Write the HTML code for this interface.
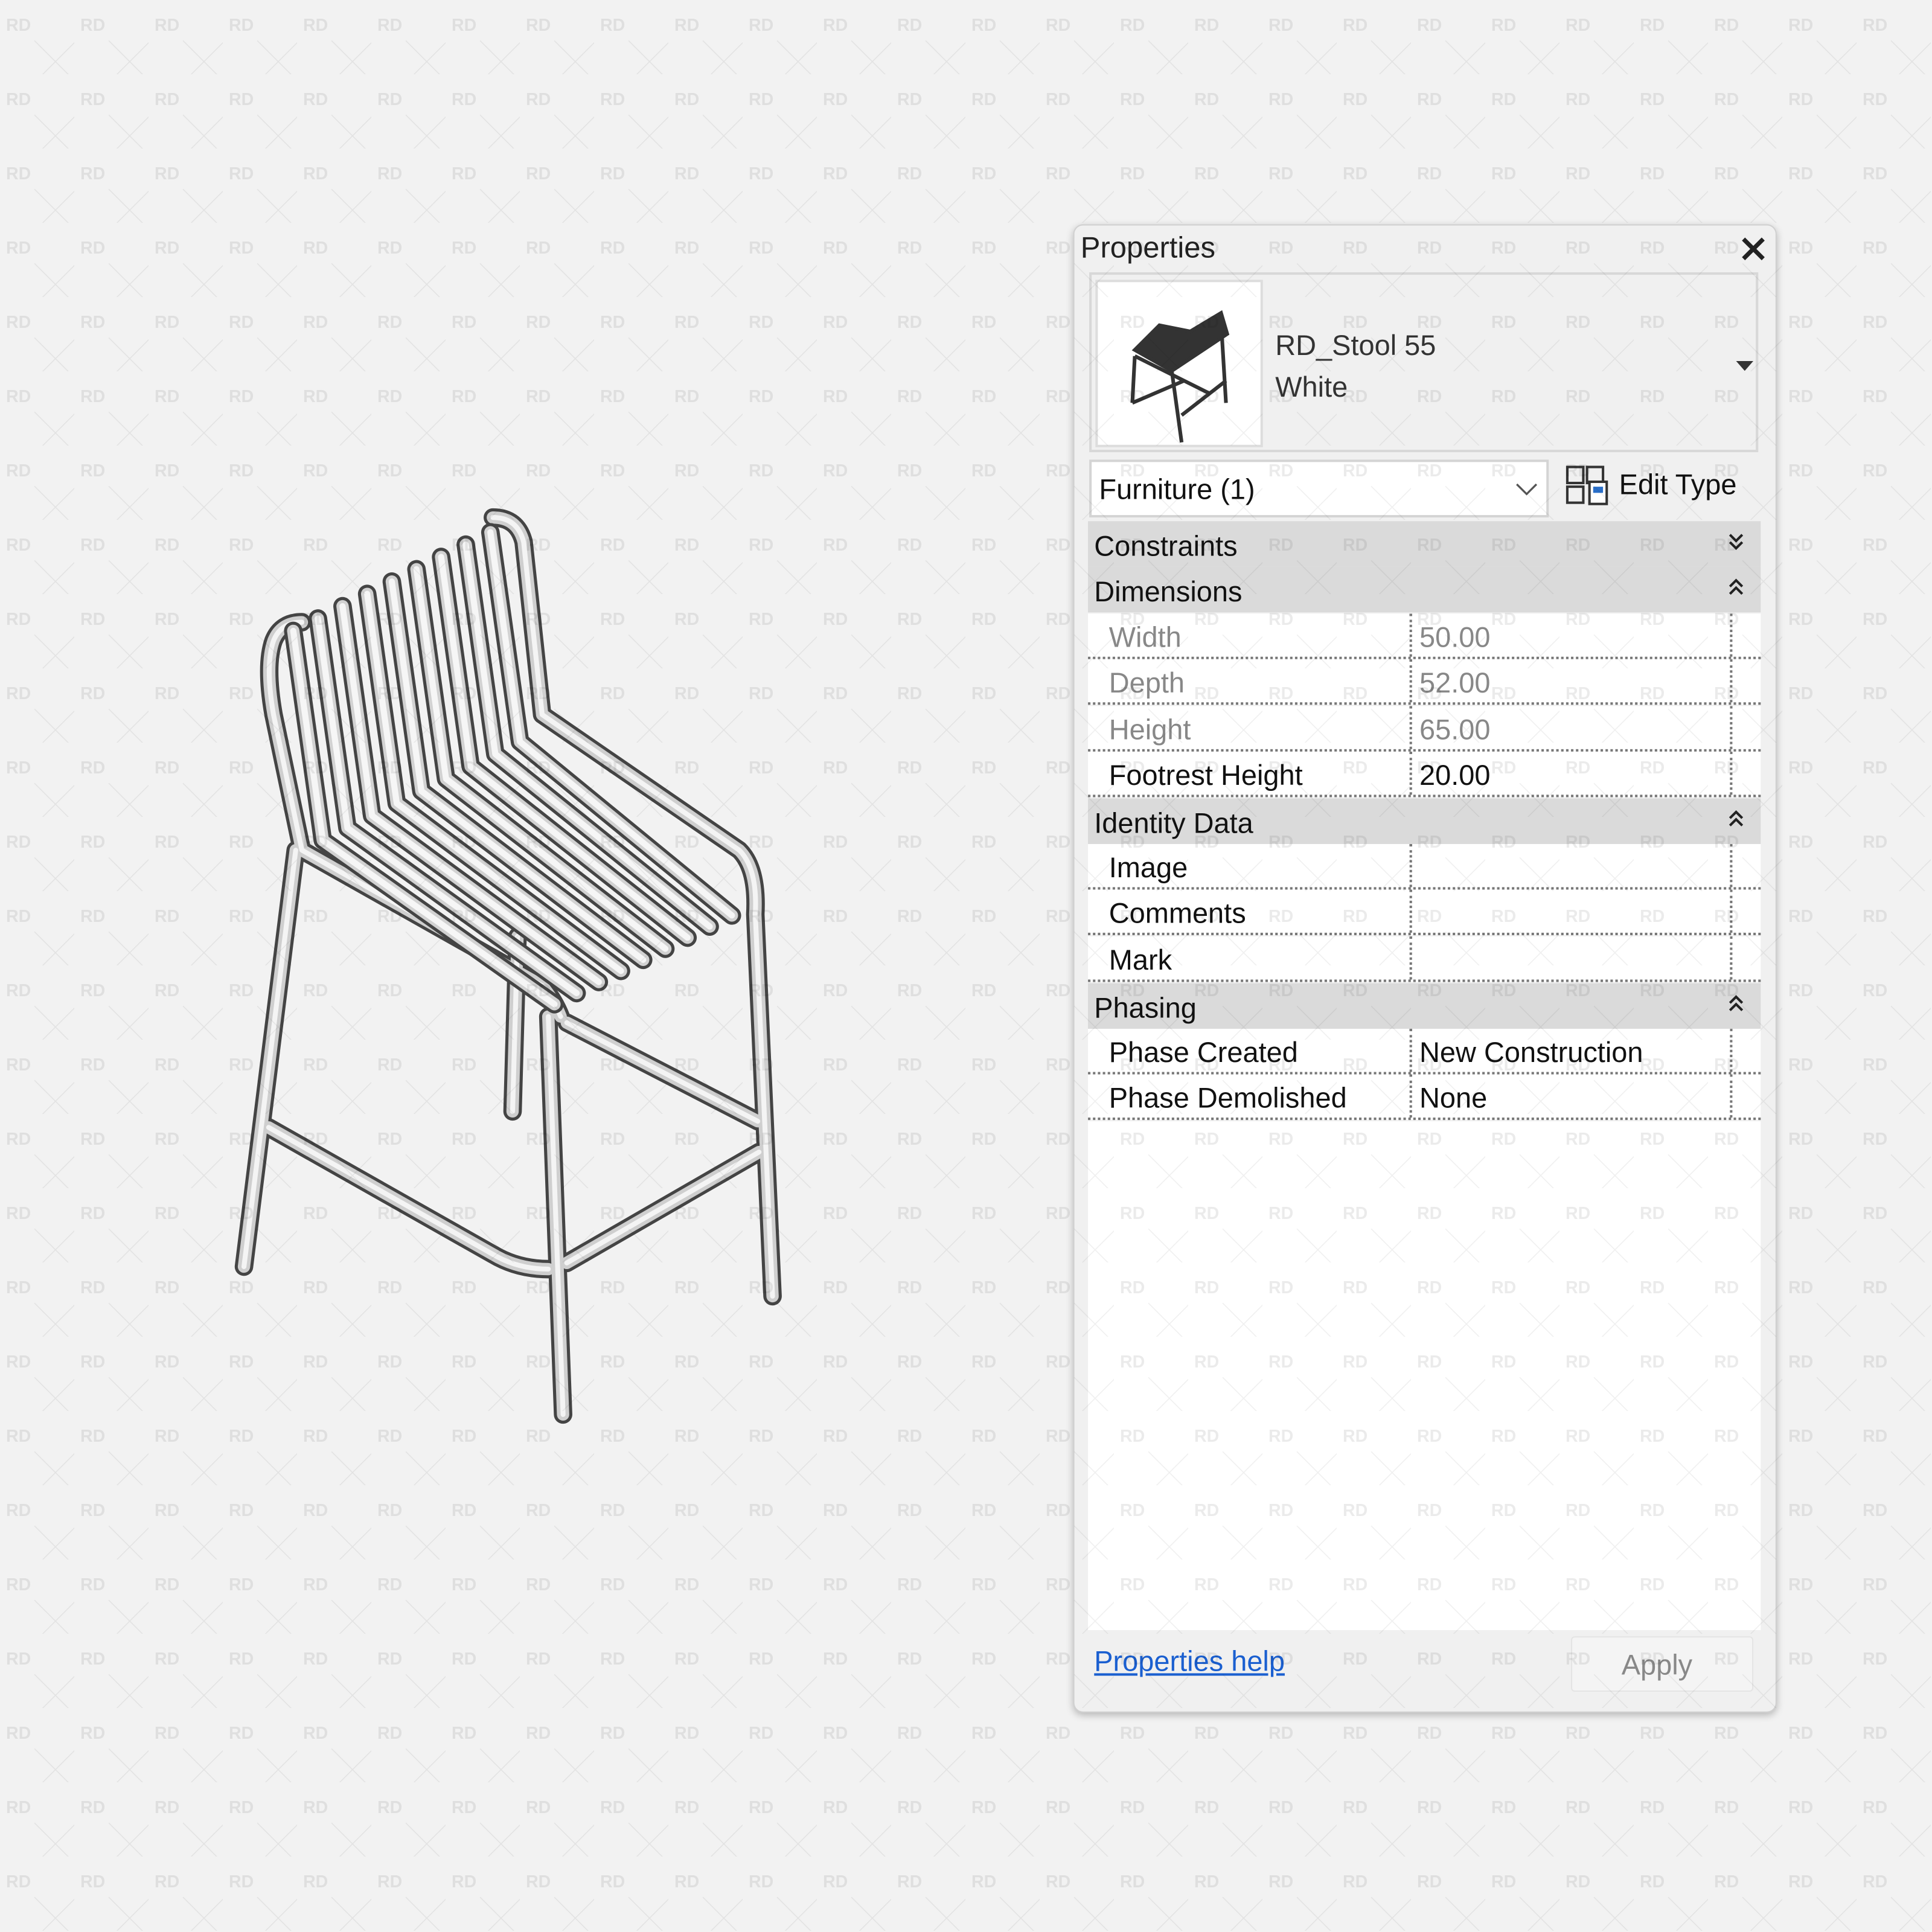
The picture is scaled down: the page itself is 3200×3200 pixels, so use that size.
<!DOCTYPE html>
<html><head><meta charset="utf-8"><style>
html,body{margin:0;padding:0;}
body{width:3200px;height:3200px;overflow:hidden;background:#f2f2f2;font-family:"Liberation Sans","DejaVu Sans",sans-serif;}
#s{position:absolute;left:0;top:0;width:1568px;height:1568px;transform:scale(2.040816);transform-origin:0 0;}
.a{position:absolute;}
#panel{left:871px;top:182px;width:569px;height:1206px;background:#f0f0f0;border:1px solid #d0d0d0;border-radius:8px;box-shadow:0 2px 6px rgba(0,0,0,0.25);}
.t{position:absolute;font-size:23px;color:#111;white-space:nowrap;line-height:1;}
.hdr{position:absolute;left:11px;width:546px;height:37px;background:#dadada;}
.hdr span{position:absolute;left:5px;top:7px;font-size:23px;color:#111;}
.hdr svg{position:absolute;right:14px;top:9px;}
.row{position:absolute;left:11px;width:546px;height:37px;background:#fff;border-bottom:2px dotted #777;box-sizing:border-box;}
.row .l{position:absolute;left:17px;top:6px;font-size:23px;color:#111;}
.row .v{position:absolute;left:261px;top:0;height:35px;width:258px;border-left:2px dotted #777;border-right:2px dotted #777;}
.row .v span{position:absolute;left:6px;top:6px;font-size:23px;color:#111;}
.row.g .l,.row.g .v span{color:#888;}
#wm{position:absolute;left:0;top:0;width:1568px;height:1568px;pointer-events:none;}
</style></head><body><div id="s">

<svg class="a" style="left:0;top:0" width="1568" height="1568">
<defs>
<path id="legs" d="M240 690 L198 1028 M445 825 L457 1148 M613 742 L627 1052 M420 760 L416 902 M218 915 L400 1018 Q420 1030 445 1030 M460 1025 L616 935 M460 830 L615 910 M222 520 Q215 540 222 580 L245 690 L440 800 Q450 812 455 825 M440 580 L600 690 Q615 705 613 742 M222 520 Q228 505 245 505 M400 420 Q420 420 425 440 L440 580"/>
<path id="sl" d="M238 512 L262 682 L450 815 M258 502 L282 672 L468 806 M278 492 L302 662 L486 797 M298 482 L322 652 L504 788 M318 472 L342 642 L522 779 M338 462 L362 632 L540 770 M358 452 L382 622 L558 761 M378 442 L402 612 L576 752 M398 432 L422 602 L594 743"/>
</defs>
<g fill="none" stroke-linecap="round" stroke-linejoin="round">
<use href="#legs" stroke="#444" stroke-width="15"/>
<use href="#legs" stroke="#cfcfcf" stroke-width="10"/>
<use href="#legs" stroke="#f4f4f4" stroke-width="4"/>
<use href="#sl" stroke="#444" stroke-width="15"/>
<use href="#sl" stroke="#d2d2d2" stroke-width="10"/>
<use href="#sl" stroke="#f6f6f6" stroke-width="5"/>
</g>
</svg>

<div id="panel" class="a">
<div class="t" style="left:5px;top:7px;font-size:24px;color:#222">Properties</div>
<svg class="a" style="left:540px;top:8px" width="22" height="22"><path d="M3 3 L19 19 M19 3 L3 19" stroke="#222" stroke-width="3.5"/></svg>
<div class="a" style="left:12px;top:38px;width:543px;height:146px;border:2px solid #d8d8d8;box-sizing:border-box"></div>
<div class="a" style="left:17px;top:44px;width:136px;height:136px;background:#fff;border:2px solid #ddd;box-sizing:border-box">
<svg width="132" height="132"><g stroke="#333" stroke-width="3" fill="none"><path d="M30 60 L28 98 M60 72 L68 130 M100 32 L104 98 M30 60 L90 90 M28 98 L70 80 M68 108 L104 80"/><path d="M30 55 L60 72 L105 42 L100 25 L75 40 L50 35 Z" fill="#333"/></g></svg></div>
<div class="t" style="left:163px;top:86px;color:#333">RD_Stool 55</div>
<div class="t" style="left:163px;top:120px;color:#333">White</div>
<svg class="a" style="left:537px;top:110px" width="14" height="10"><path d="M0 0 L14 0 L7 8Z" fill="#333"/></svg>
<div class="a" style="left:12px;top:190px;width:373px;height:47px;background:#fff;border:2px solid #d4d4d4;box-sizing:border-box"></div>
<div class="t" style="left:20px;top:203px">Furniture (1)</div>
<svg class="a" style="left:358px;top:208px" width="18" height="12"><path d="M1 2 L9 10 L17 2" stroke="#555" stroke-width="1.6" fill="none"/></svg>
<svg class="a" style="left:398px;top:194px" width="36" height="34"><g fill="none" stroke="#333" stroke-width="2"><rect x="2" y="2" width="13" height="13"/><rect x="2" y="18" width="13" height="13"/><rect x="18" y="2" width="13" height="13"/><rect x="20" y="14" width="14" height="18" fill="#fff"/></g><rect x="23" y="18" width="8" height="5" fill="#2a6fc9"/></svg>
<div class="t" style="left:442px;top:199px">Edit Type</div>

<div class="hdr" style="top:240px"><span>Constraints</span><svg width="12" height="16"><path d="M1 2 L6 7 L11 2 M1 8 L6 13 L11 8" stroke="#222" stroke-width="2" fill="none"/></svg></div>
<div class="hdr" style="top:277px"><span>Dimensions</span><svg width="12" height="16"><path d="M1 7 L6 2 L11 7 M1 13 L6 8 L11 13" stroke="#222" stroke-width="2" fill="none"/></svg></div>
<div class="row g" style="top:315px"><span class="l">Width</span><div class="v"><span>50.00</span></div></div>
<div class="row g" style="top:352px"><span class="l">Depth</span><div class="v"><span>52.00</span></div></div>
<div class="row g" style="top:390px"><span class="l">Height</span><div class="v"><span>65.00</span></div></div>
<div class="row" style="top:427px"><span class="l">Footrest Height</span><div class="v"><span>20.00</span></div></div>
<div class="hdr" style="top:465px"><span>Identity Data</span><svg width="12" height="16"><path d="M1 7 L6 2 L11 7 M1 13 L6 8 L11 13" stroke="#222" stroke-width="2" fill="none"/></svg></div>
<div class="row" style="top:502px"><span class="l">Image</span><div class="v"></div></div>
<div class="row" style="top:539px"><span class="l">Comments</span><div class="v"></div></div>
<div class="row" style="top:577px"><span class="l">Mark</span><div class="v"></div></div>
<div class="hdr" style="top:615px"><span>Phasing</span><svg width="12" height="16"><path d="M1 7 L6 2 L11 7 M1 13 L6 8 L11 13" stroke="#222" stroke-width="2" fill="none"/></svg></div>
<div class="row" style="top:652px"><span class="l">Phase Created</span><div class="v"><span>New Construction</span></div></div>
<div class="row" style="top:689px"><span class="l">Phase Demolished</span><div class="v"><span>None</span></div></div>
<div class="a" style="left:11px;top:727px;width:546px;height:413px;background:#fff"></div>
<div class="t" style="left:16px;top:1154px;color:#1a5fd0;text-decoration:underline">Properties help</div>
<div class="a" style="left:403px;top:1145px;width:146px;height:43px;background:#f4f4f4;border:1px solid #e4e4e4;border-radius:3px"></div>
<div class="t" style="left:444px;top:1157px;color:#888">Apply</div>
</div>

<svg id="wm" width="1568" height="1568">
<defs><pattern id="p" x="0" y="0" width="60.27" height="60.27" patternUnits="userSpaceOnUse">
<text x="15" y="25" font-family="Liberation Sans" font-weight="bold" font-size="14" fill="rgba(0,0,0,0.08)" text-anchor="middle">RD</text>
<path d="M28 33 L62 67 M62 33 L28 67" stroke="rgba(0,0,0,0.06)" stroke-width="0.8"/>
</pattern></defs>
<rect x="-15" y="-15" width="1600" height="1600" fill="url(#p)"/>
</svg>
</div></body></html>
